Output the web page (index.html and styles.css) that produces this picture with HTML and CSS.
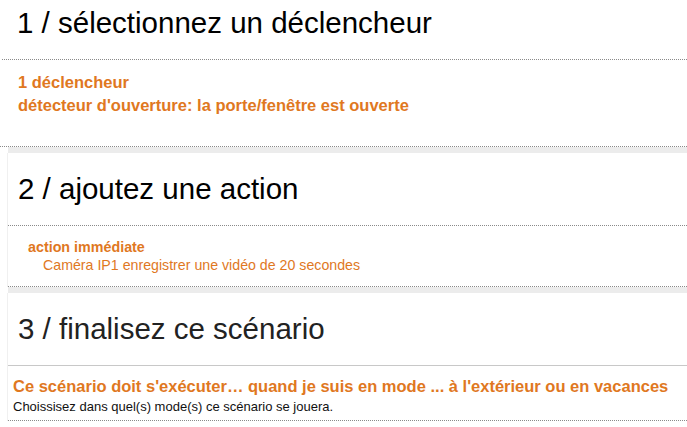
FILE: index.html
```html
<!DOCTYPE html>
<html lang="fr">
<head>
<meta charset="utf-8">
<link rel="stylesheet" href="styles.css">
</head>
<body>
<div class="page">
  <section class="step step-first">
    <h1 class="step-title">1 / sélectionnez un déclencheur</h1>
    <div class="step-body trigger">
      <div class="trigger-line">1 déclencheur</div>
      <div class="trigger-line">détecteur d'ouverture: la porte/fenêtre est ouverte</div>
    </div>
  </section>
  <div class="band"></div>
  <section class="step">
    <h1 class="step-title">2 / ajoutez une action</h1>
    <div class="step-body action">
      <div class="action-type">action immédiate</div>
      <div class="action-item">Caméra IP1 enregistrer une vidéo de 20 secondes</div>
    </div>
  </section>
  <div class="band"></div>
  <section class="step step-last">
    <h1 class="step-title dark">3 / finalisez ce scénario</h1>
    <div class="step-body final">
      <div class="final-title">Ce scénario doit s'exécuter… quand je suis en mode ... à l'extérieur ou en vacances</div>
      <div class="final-hint">Choissisez dans quel(s) mode(s) ce scénario se jouera.</div>
    </div>
  </section>
</div>
</body>
</html>
```

FILE: styles.css
```css
html, body {
  margin: 0;
  padding: 0;
  background: #fff;
}
body {
  font-family: "Liberation Sans", Arial, sans-serif;
  width: 687px;
  height: 427px;
  overflow: hidden;
}
.page {
  display: flex;
  flex-direction: column;
}
.step {
  margin-left: 7px;
  border-left: 1px solid #f0f0f0;
}
.step-first {
  margin-left: 0;
  border-left: none;
}
.step-title {
  margin: 0;
  padding: 20px 0 20px 10px;
  font-size: 29.5px;
  line-height: 32px;
  font-weight: normal;
  color: #000;
  white-space: nowrap;
  border-bottom: 1px dotted #8a8a8a;
}
.step-first .step-title {
  padding: 7px 0 20px 15px;
  margin-left: 2px;
}
.step-title.dark {
  color: #222;
  border-bottom: 1px solid #c8c8c8;
}
.step-body {
  border-bottom: 1px dotted #8a8a8a;
  white-space: nowrap;
}
.trigger {
  padding: 11px 0 29px 18px;
  color: #e0781f;
  font-weight: bold;
  font-size: 16.5px;
  line-height: 23px;
}
.action {
  padding: 12px 0 12px 20px;
  color: #e0781f;
}
.action-type {
  font-weight: bold;
  font-size: 14.3px;
  line-height: 18px;
}
.action-item {
  font-size: 14.2px;
  line-height: 18px;
  padding-left: 15px;
}
.final {
  padding: 9px 0 3px 5px;
}
.final-title {
  color: #e0781f;
  font-weight: bold;
  font-size: 16.5px;
  line-height: 22px;
}
.final-hint {
  color: #111;
  font-size: 13px;
  line-height: 20px;
}
.band {
  height: 6px;
  margin-left: 8px;
  background: #ececec;
}
```
